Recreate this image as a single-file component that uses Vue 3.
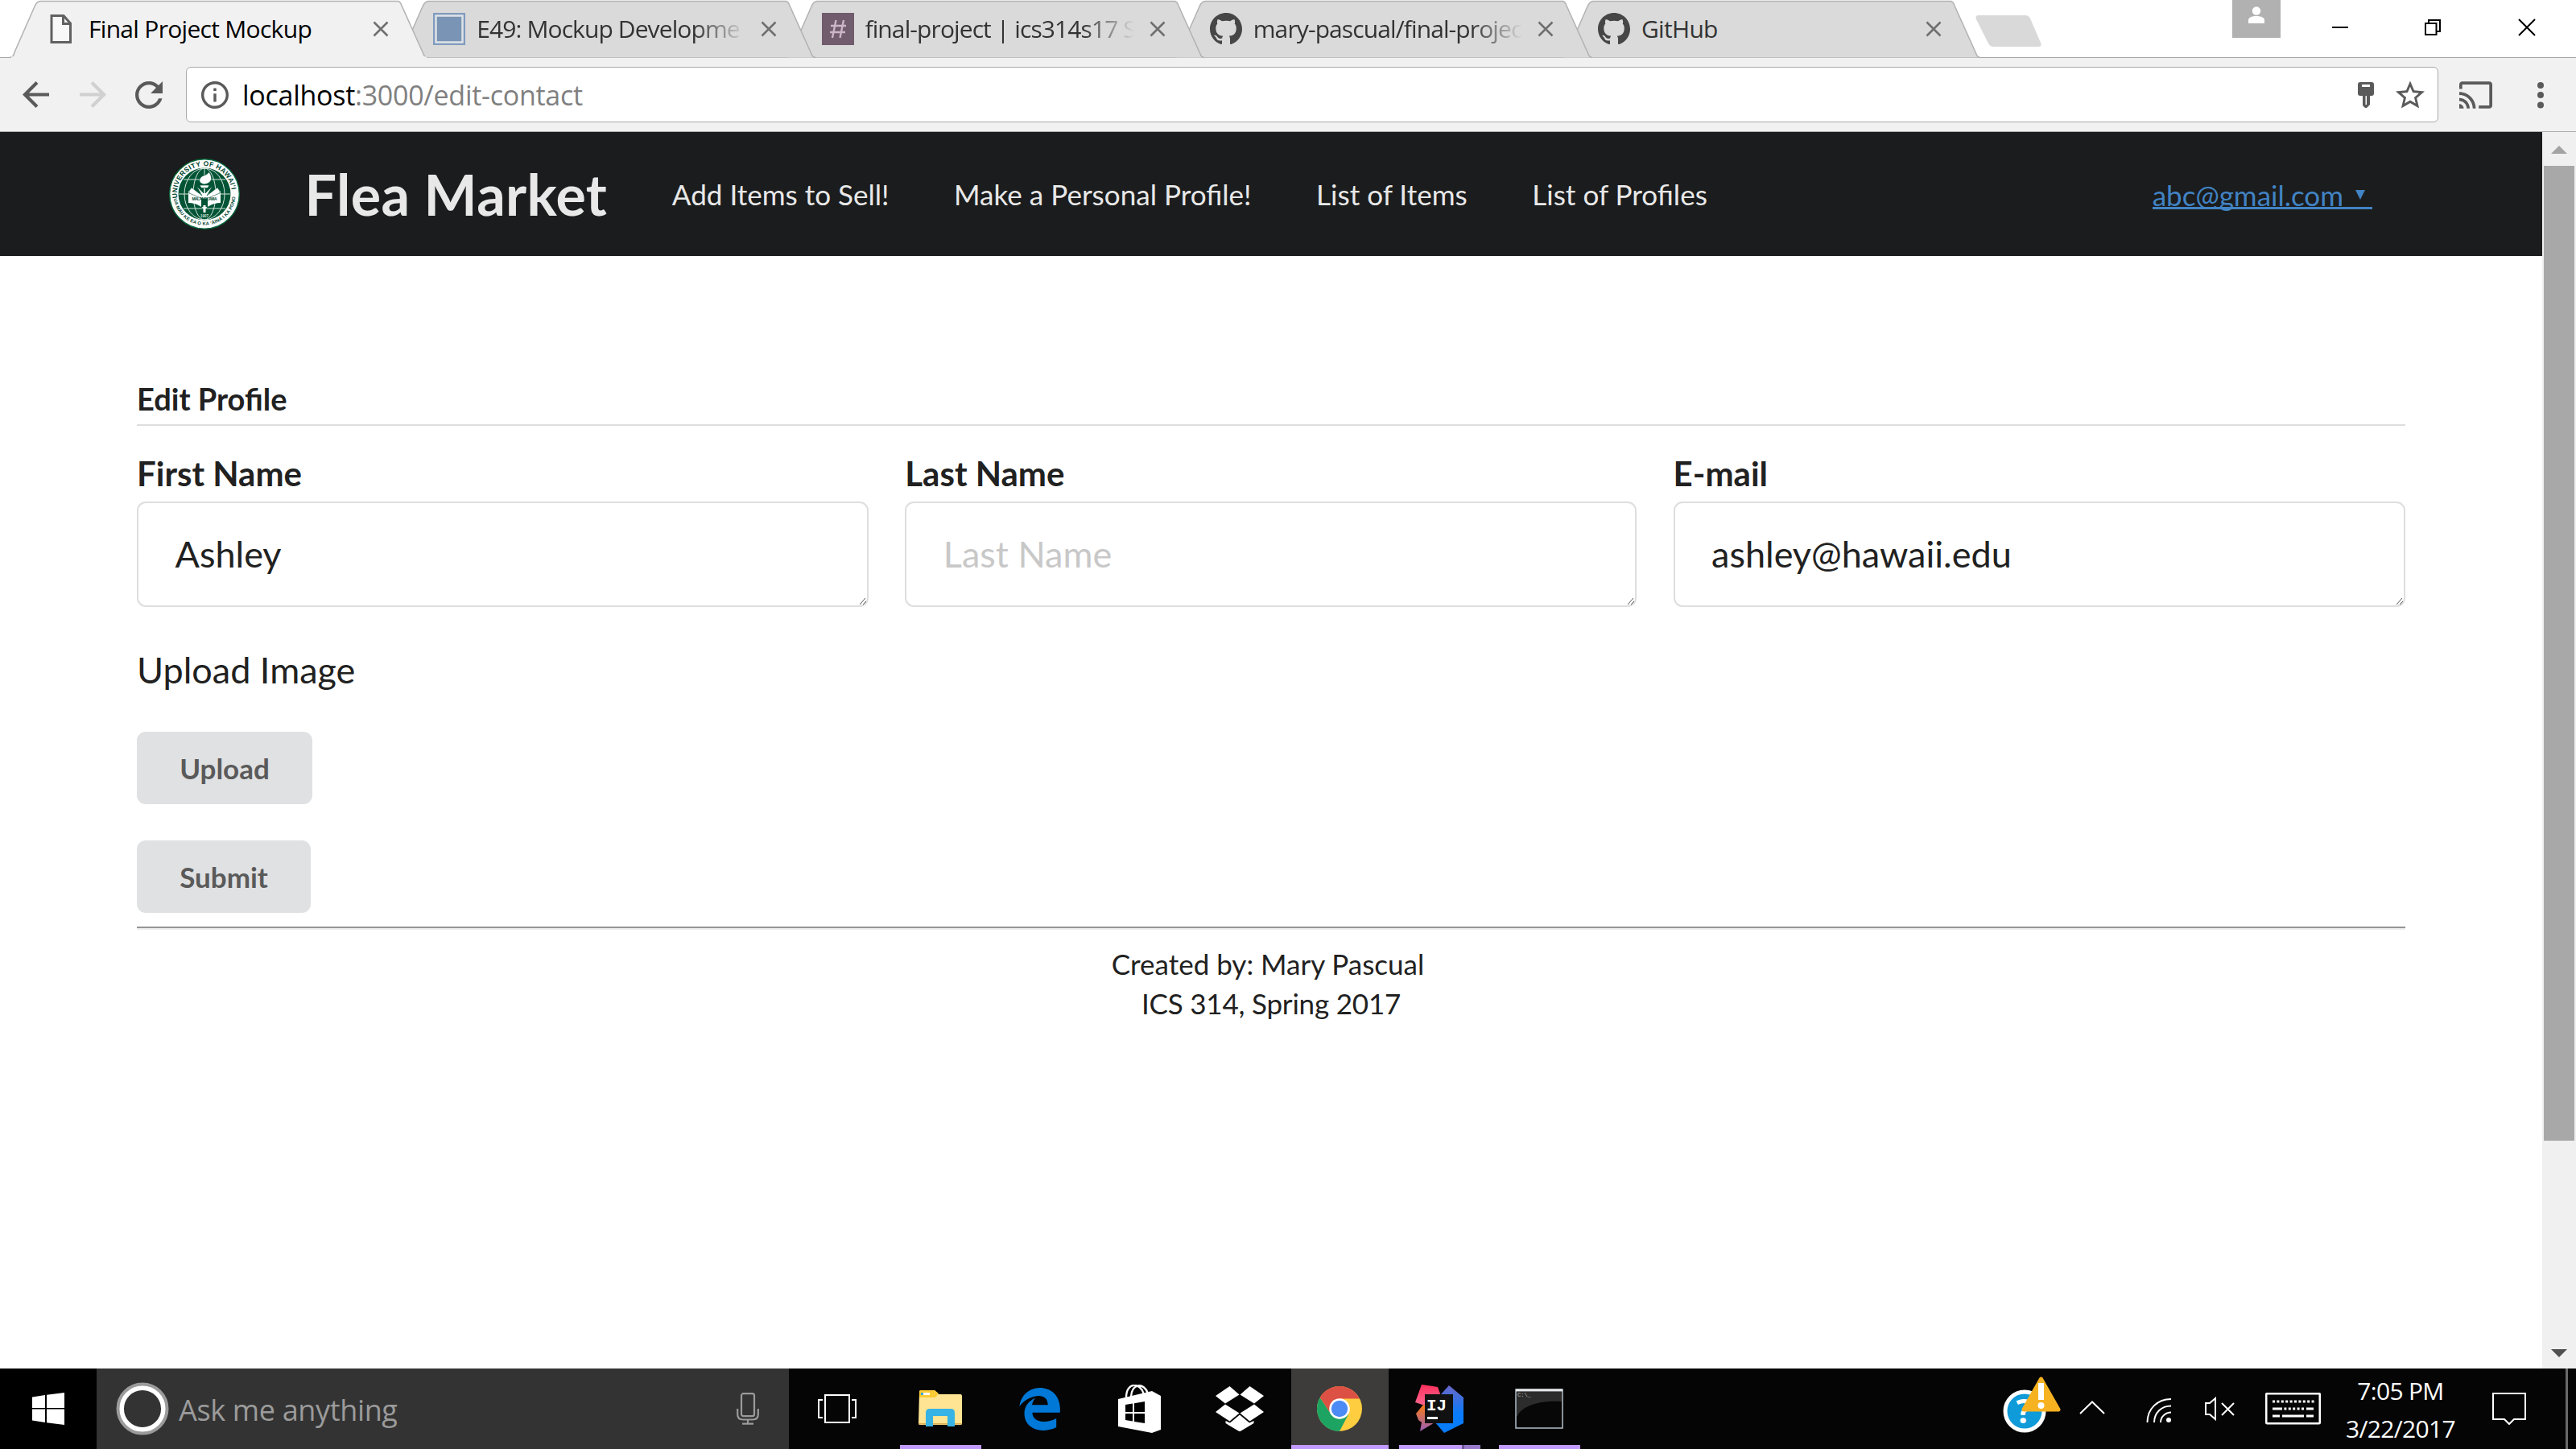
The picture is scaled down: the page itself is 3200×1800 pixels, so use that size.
<script setup>
const githubMark =
  'M8 0C3.58 0 0 3.58 0 8c0 3.54 2.29 6.53 5.47 7.59.4.07.55-.17.55-.38 0-.19-.01-.82-.01-1.49-2.01.37-2.53-.49-2.69-.94-.09-.23-.48-.94-.82-1.13-.28-.15-.68-.52-.01-.53.63-.01 1.08.58 1.23.82.72 1.21 1.87.87 2.33.66.07-.52.28-.87.51-1.07-1.78-.2-3.64-.89-3.64-3.95 0-.87.31-1.59.82-2.15-.08-.2-.36-1.02.08-2.12 0 0 .67-.21 2.2.82.64-.18 1.32-.27 2-.27s1.36.09 2 .27c1.53-1.04 2.2-.82 2.2-.82.44 1.1.16 1.92.08 2.12.51.56.82 1.27.82 2.15 0 3.07-1.87 3.75-3.65 3.95.29.25.54.73.54 1.48 0 1.07-.01 1.93-.01 2.2 0 .21.15.46.55.38A8.01 8.01 0 0 0 16 8c0-4.42-3.58-8-8-8z'

const tabs = [
  { title: 'Final Project Mockup', icon: 'file' },
  { title: 'E49: Mockup Developme', icon: 'square', fade: true },
  { title: 'final-project | ics314s17 S', icon: 'hash', fade: true },
  { title: 'mary-pascual/final-projec', icon: 'github', fade: true },
  { title: 'GitHub', icon: 'github' },
]

const links = ['Add Items to Sell!', 'Make a Personal Profile!', 'List of Items', 'List of Profiles']

const fields = [
  { label: 'First Name', value: 'Ashley' },
  { label: 'Last Name', placeholder: 'Last Name' },
  { label: 'E-mail', value: 'ashley@hawaii.edu' },
]
</script>

<template>
  <div class="screen">
    <header class="tabstrip">
      <div
        v-for="(tab, i) in tabs"
        :key="tab.title"
        class="tab"
        :class="{ active: i === 0 }"
        :style="{ zIndex: tabs.length - i }"
      >
        <svg class="tab-shape" width="518" height="72" viewBox="0 0 518 72">
          <path d="M-1 71.5C3 71 4 69 5 65L30 8Q33 1.5 37 1.5H481Q484 1.5 486 7L513 67Q514 71 518 71.5" />
          <path v-if="i === 0" class="seam" d="M1 71.5H517" />
        </svg>
        <span class="tab-icon">
          <svg v-if="tab.icon === 'file'" width="40" height="40" viewBox="0 0 40 40">
            <path d="M8 3.5H23L31.5 13V36.5H8Z M22.5 4V13.5H31" fill="#f8f8f8" stroke="#616161" stroke-width="3" />
          </svg>
          <svg v-else-if="tab.icon === 'square'" width="40" height="40" viewBox="0 0 40 40">
            <rect width="40" height="40" fill="#7f9bbd" />
            <rect x="3.5" y="3.5" width="33" height="33" fill="#7994b4" stroke="#dfe3e8" stroke-width="2.5" />
          </svg>
          <svg v-else-if="tab.icon === 'hash'" width="40" height="40" viewBox="0 0 40 40">
            <rect width="40" height="40" fill="#705c6c" />
            <path d="M17.5 9L13 31M27 9L22.500 31M11 16H30M10 24H29" stroke="#cdb5c8" stroke-width="2.4" />
          </svg>
          <svg v-else width="40" height="40" viewBox="0 0 16 16"><path :d="githubMark" fill="#464646" /></svg>
        </span>
        <span class="tab-title" :class="{ fade: tab.fade }">{{ tab.title }}</span>
        <svg class="tab-close" width="20" height="20" viewBox="0 0 20 20">
          <path d="M1.500 1.500L18.500 18.500M18.500 1.500L1.500 18.500" />
        </svg>
      </div>
      <svg class="new-tab" width="84" height="42" viewBox="0 0 84 42">
        <path d="M5 1H63Q67 1 69 5L82 35Q84 40 79 40H24Q19 40 17 36L2 6Q0 1 5 1Z" fill="#d9d9d9" />
      </svg>
      <div class="window-controls">
        <span class="user">
          <svg width="22" height="22" viewBox="0 0 22 22" fill="#fff">
            <circle cx="11" cy="5.500" r="5.200" />
            <path d="M1 21V17C1 13 7 12 11 12S21 13 21 17V21Z" />
          </svg>
        </span>
        <svg class="minimize" width="22" height="22" viewBox="0 0 22 22"><path d="M1 11H21" stroke="#000" stroke-width="2" /></svg>
        <svg class="restore" width="22" height="22" viewBox="0 0 22 22">
          <path d="M2 6H15.500V20H2ZM6 6V2H20V16H16" fill="none" stroke="#000" stroke-width="2" />
        </svg>
        <svg class="close" width="22" height="22" viewBox="0 0 22 22"><path d="M1 1L21 21M21 1L1 21" stroke="#000" stroke-width="2" /></svg>
      </div>
    </header>

    <div class="toolbar">
      <svg class="back" width="33" height="33" viewBox="4 4 16 16"><path d="M20 11H7.830l5.590-5.590L12 4l-8 8 8 8 1.410-1.410L7.830 13H20v-2z" fill="#5a5a5a" /></svg>
      <svg class="forward" width="33" height="33" viewBox="4 4 16 16"><path d="M4 13H16.170l-5.590 5.590L12 20l8-8-8-8-1.410 1.410L16.170 11H4v2z" fill="#d0d0d0" /></svg>
      <svg class="reload" width="34" height="34" viewBox="4 4 16 16">
        <path d="M17.650 6.350C16.200 4.900 14.210 4 12 4c-4.420 0-7.990 3.580-7.990 8s3.570 8 7.990 8c3.730 0 6.840-2.550 7.730-6h-2.080c-.82 2.330-3.040 4-5.650 4-3.310 0-6-2.690-6-6s2.690-6 6-6c1.660 0 3.140.69 4.220 1.780L13 11h7V4l-2.350 2.350z" fill="#5a5a5a" />
      </svg>
      <div class="omnibox">
        <svg width="34" height="34" viewBox="2 2 20 20">
          <path d="M11 17h2v-6h-2v6zm1-15C6.480 2 2 6.480 2 12s4.480 10 10 10 10-4.480 10-10S17.520 2 12 2zm0 18c-4.410 0-8-3.590-8-8s3.590-8 8-8 8 3.590 8 8-3.590 8-8 8zM11 9h2V7h-2v2z" fill="#5a5a5a" />
        </svg>
        <span class="url"><b>localhost</b>:3000/edit-contact</span>
        <svg class="key" width="22" height="32" viewBox="0 0 22 32">
          <path d="M4 0H18Q21 0 21 3V14Q21 17 18 17H16V28L12 32H10L7 29V17H4Q1 17 1 14V3Q1 0 4 0ZM6 3V6H16V3ZM10.500 17V28H12V17Z" fill="#5a5a5a" fill-rule="evenodd" />
        </svg>
        <svg class="star" width="36" height="35" viewBox="2 2 20 19">
          <path d="M22 9.240l-7.190-.62L12 2 9.190 8.630 2 9.240l5.460 4.730L5.820 21 12 17.270 18.180 21l-1.630-7.030L22 9.240zM12 15.400l-3.760 2.270 1-4.280-3.320-2.880 4.380-.38L12 6.100l1.710 4.040 4.380.38-3.320 2.880 1 4.280L12 15.400z" fill="#5a5a5a" />
        </svg>
      </div>
      <svg class="cast" width="41" height="34" viewBox="1 3 22 18">
        <path d="M21 3H3c-1.100 0-2 .9-2 2v3h2V5h18v14h-7v2h7c1.100 0 2-.9 2-2V5c0-1.100-.9-2-2-2zM1 18v3h3c0-1.660-1.340-3-3-3zm0-4v2c2.760 0 5 2.240 5 5h2c0-3.870-3.130-7-7-7zm0-4v2c4.970 0 9 4.030 9 9h2c0-6.080-4.930-11-11-11z" fill="#5a5a5a" />
      </svg>
      <svg class="dots" width="10" height="34" viewBox="0 0 10 34" fill="#5a5a5a">
        <circle cx="5" cy="5" r="4" /><circle cx="5" cy="17" r="4" /><circle cx="5" cy="29.500" r="4" />
      </svg>
    </div>

    <div class="viewport">
      <div class="page">
        <nav class="navbar">
          <svg class="seal" width="88" height="88" viewBox="0 0 88 88">
            <defs>
              <path id="seal-top" d="M10.500 49A34 34 0 1 1 77.500 49" />
              <path id="seal-bottom" d="M5.500 47A38.600 38.600 0 0 0 82.500 47" />
            </defs>
            <circle cx="44" cy="44" r="43.300" fill="#fff" stroke="#0a6a40" stroke-width="1.400" />
            <circle cx="44" cy="44" r="32.500" fill="#005435" />
            <g fill="none" stroke="#d5e4dc" stroke-width="1">
              <ellipse cx="44" cy="44" rx="14" ry="32" />
              <ellipse cx="44" cy="44" rx="25" ry="32" />
              <path d="M44 12V20M12 44H76M18 26H70M18 62H70" />
            </g>
            <path d="M24 40L40 47V60H48V47L64 40V55Q53 55 44 63Q35 55 24 55Z" fill="#fff" />
            <path d="M28 36L41 46L34 34L43 43V36H45V43L54 34L47 46L60 36L63 40V43L46 50H42L25 43V40Z" fill="#fff" stroke="#005435" stroke-width=".6" />
            <path d="M38 33H50L48 36.500H40Z M44 32C34 30 38 23 43 21C46 20 50 18 49 16C54 22 55 30 44 32Z" fill="#fff" stroke="#005435" stroke-width=".7" />
            <path d="M42.500 58H45.500V67H42.500Z" fill="#fff" />
            <text class="seal-motto" x="28.500" y="51.500" textLength="31">MALAMALAMA</text>
            <text class="seal-year" x="39" y="73">1907</text>
            <text class="seal-text"><textPath href="#seal-top" textLength="108">UNIVERSITY OF HAWAI‘I</textPath></text>
            <text class="seal-text small"><textPath href="#seal-bottom" startOffset="3" textLength="112">UA MAU KE EA O KA ‘ĀINA I KA PONO</textPath></text>
          </svg>
          <h1>Flea Market</h1>
          <a v-for="link in links" :key="link">{{ link }}</a>
          <a class="account">abc@gmail.com
            <svg width="12" height="12" viewBox="0 0 12 12"><path d="M0 0H12L6 12Z" fill="#4183c4" /></svg>
          </a>
        </nav>

        <main class="container">
          <h4>Edit Profile</h4>
          <div class="fields">
            <div v-for="field in fields" :key="field.label" class="field">
              <label>{{ field.label }}</label>
              <div class="textarea">
                <span v-if="field.value">{{ field.value }}</span>
                <span v-else class="placeholder">{{ field.placeholder }}</span>
                <svg class="grip" width="8" height="8" viewBox="0 0 8 8"><path d="M0 8L7 0M4 8L8 4" stroke="#555" stroke-width="1" /></svg>
              </div>
            </div>
          </div>
          <p class="upload-label">Upload Image</p>
          <button type="button" class="upload">Upload</button>
          <button type="button" class="submit">Submit</button>
          <div class="rule"></div>
          <footer>
            <div class="author">Created by: Mary Pascual</div>
            <div class="course">ICS 314, Spring 2017</div>
          </footer>
        </main>
      </div>
      <div class="scrollbar">
        <svg width="20" height="10" viewBox="0 0 20 10"><path d="M10 0L20 10H0Z" fill="#a3a3a3" /></svg>
        <div class="thumb"></div>
        <svg class="down" width="20" height="10" viewBox="0 0 20 10"><path d="M0 0H20L10 10Z" fill="#505050" /></svg>
      </div>
    </div>

    <div class="taskbar">
      <div class="start">
        <svg width="40" height="40" viewBox="0 0 40 40" fill="#fff"><path d="M0 5.500L16 3V19H0ZM18 2.700L40 0V19H18ZM0 20.500H16V37L0 34.500ZM18 20.500H40V40L18 37.300Z" /></svg>
      </div>
      <div class="search">
        <svg width="66" height="66" viewBox="0 0 66 66" fill="none">
          <circle cx="33" cy="33" r="30" stroke="#9b9b9b" stroke-width="5" />
          <circle cx="33" cy="33" r="25.800" stroke="#fff" stroke-width="5.500" />
        </svg>
        <span>Ask me anything</span>
        <svg class="mic" width="28" height="40" viewBox="0 0 28 40" fill="none" stroke="#9b9b9b" stroke-width="2.200">
          <rect x="6" y="1.200" width="16" height="28" rx="2.500" />
          <path d="M1.200 20V27Q1.200 33.500 8 33.500H20Q26.800 33.500 26.800 27V20M14 34V39M7 38.700H21" />
        </svg>
      </div>

      <div class="slot taskview">
        <svg width="48" height="36" viewBox="0 0 48 36" fill="none" stroke="#fff" stroke-width="2">
          <path d="M9 1H39V35H9ZM6 7H1V29H6M42 7H47V29H42" />
        </svg>
      </div>
      <div class="slot">
        <svg width="54" height="48" viewBox="0 0 54 48">
          <path d="M1 3Q1 1 3 1H20L24 6H52Q54 6 54 8V42Q54 44 52 44H2Q0 44 0 42Z" fill="#ffe593" />
          <path d="M1 3Q1 1 3 1H20L25 5L21 10H1Z" fill="#fccb36" />
          <path d="M3 4H14V7H3Z" fill="#fff" />
          <path d="M3 4H6V7H3Z" fill="#3ba9cf" />
          <path d="M0 42H54V43.500H0Z" fill="#dcae50" />
          <path d="M9 46V29Q9 24 14 24H40Q45 24 45 29V46H36V33H18V46Z" fill="#37b3e5" />
        </svg>
        <i class="running"></i>
      </div>
      <div class="slot">
        <svg width="51" height="54" viewBox="2.600 1.600 18.700 20.400" preserveAspectRatio="none">
          <path d="M2.740 10.810C3.830-1.360 22.500-1.360 21.200 13.560H8.610C8.610 17.850 14.420 19.210 19.540 16.310V20.530C13.250 23.880 5 21.430 5 14.090C5 8.580 9.970 6.810 9.970 6.810C9.970 6.810 8.580 8.580 8.540 10.050H15.700C15.700 2.930 5.900 5.570 2.740 10.810Z" fill="#0078d7" />
        </svg>
      </div>
      <div class="slot">
        <svg width="53" height="60" viewBox="0 0 53 60">
          <path d="M10 16C10-4 28-3 32 12M16 15C17-2 32-3 37 11" fill="none" stroke="#fff" stroke-width="2.400" />
          <path d="M0 18L42 8L53 14V56L42 60L0 52Z" fill="#fff" />
          <path d="M9 25L18 23.500V34H9ZM20 23.200L33 21V34H20ZM9 36H18V45.500L9 44ZM20 36H33V48L20 46Z" fill="#000" />
        </svg>
      </div>
      <div class="slot">
        <svg width="60" height="56" viewBox="0 0 60 56" fill="#fff">
          <path d="M17.500 0L29.500 10.500L12 21.500L0 12ZM42.500 0L60 12L48 21.500L30.500 10.500ZM12 22.500L29.500 33.500L17.500 43.500L0 32ZM48 22.500L60 32L42.500 43.500L30.500 33.500ZM30 35.500L42 45.500L47.500 43V46L30 56.500L12.500 46V43L18 45.500Z" />
        </svg>
      </div>
      <div class="slot current">
        <svg width="56" height="56" viewBox="0 0 56 56">
          <circle cx="28" cy="28" r="28" fill="#ffcd40" />
          <path d="M3.750 14A28 28 0 0 0 28 56L39 35L17.200 34.300Z" fill="#1da462" />
          <path d="M28 28L17.200 34.300L3.750 14A28 28 0 0 1 53 15.500H28Z" fill="#dd5144" />
          <circle cx="28" cy="28" r="12.800" fill="#fff" />
          <circle cx="28" cy="28" r="10.200" fill="#4c8bf5" />
        </svg>
        <i class="running"></i>
      </div>
      <div class="slot">
        <svg width="60" height="60" viewBox="0 0 60 60">
          <defs>
            <linearGradient id="ij-pink" x2="0" y2="1"><stop offset="0" stop-color="#fe315d" /><stop offset="1" stop-color="#f9668e" /></linearGradient>
            <linearGradient id="ij-blue" x2="0" y2="1"><stop offset="0" stop-color="#6b66c8" /><stop offset=".6" stop-color="#087cfa" /></linearGradient>
            <linearGradient id="ij-low" x2="0" y2="1"><stop offset="0" stop-color="#f97a12" /><stop offset="1" stop-color="#9a5fb8" /></linearGradient>
          </defs>
          <path d="M10 25L1 36L4 44L8 47L6 58L26 46V30Z" fill="url(#ij-low)" />
          <path d="M8 0L28 3L34 20L12 26L0 22Z" fill="url(#ij-pink)" />
          <path d="M32 12L42 1L60 16V48L36 60L24 46Z" fill="url(#ij-blue)" />
          <rect x="12" y="12" width="35" height="36" fill="#111" />
          <text class="ij" x="14" y="32">IJ</text>
          <rect x="15" y="40" width="13" height="3" fill="#fff" />
        </svg>
        <i class="running grouped"></i>
      </div>
      <div class="slot">
        <svg width="60" height="50" viewBox="0 0 60 50">
          <rect x="1" y="1" width="58" height="48" fill="#070707" stroke="#aab4bc" stroke-width="1.600" />
          <path d="M2 4H58V16C30 14 8 22 3 34H2Z" fill="#2c2c2c" />
          <path d="M1 2H59" stroke="#e4e8ea" stroke-width="3" />
          <text class="prompt" x="3" y="10">C:\_</text>
        </svg>
        <i class="running"></i>
      </div>

      <div class="tray">
        <svg class="help" width="74" height="72" viewBox="0 0 74 72">
          <circle cx="28" cy="44" r="24" fill="#0f9ad9" stroke="#fff" stroke-width="5" />
          <text class="question" x="17.500" y="59">?</text>
          <path d="M48.500 4L70 42H27Z" fill="#f6b221" stroke="#f6b221" stroke-width="5" stroke-linejoin="round" />
          <path d="M45 9H52V30H45Z" fill="#fff" /><circle cx="48.500" cy="37" r="4" fill="#fff" />
        </svg>
        <svg class="chevron" width="32" height="17" viewBox="0 0 32 17"><path d="M1 16L16 1.500L31 16" fill="none" stroke="#fff" stroke-width="2" /></svg>
        <svg class="wifi" width="32" height="32" viewBox="0 0 32 32" fill="none" stroke="#fff" stroke-width="2">
          <path d="M1.500 31C1.500 14 14 2 31 2M10 31C10 19 19 10.500 31 10.500M18 31C18 24 24 18.500 31 18.500" />
          <circle cx="28" cy="28" r="3" fill="#fff" stroke="none" />
        </svg>
        <svg class="volume" width="37" height="30" viewBox="0 0 37 30" fill="none" stroke="#fff" stroke-width="2">
          <path d="M1 8H6L13 2V28L6 22H1ZM21 8L36 23M36 8L21 23" />
        </svg>
        <svg class="keyboard" width="69" height="40" viewBox="0 0 69 40" fill="none" stroke="#fff">
          <rect x="1.200" y="1.200" width="66.600" height="37" rx="1" stroke-width="2.600" />
          <path d="M9 11H61M18 20H50" stroke-width="3" stroke-dasharray="3 2.400" />
          <path d="M9 20H18M51 20H60M9 29H18M21 29H48M51 29H60" stroke-width="3" />
        </svg>
        <div class="clock"><span>7:05 PM</span><span class="date">3/22/2017</span></div>
        <svg class="action" width="42" height="40" viewBox="0 0 42 40"><path d="M1 1H41V33H27L21 39L15 33H1Z" fill="none" stroke="#fff" stroke-width="2" /></svg>
        <i class="peek"></i>
      </div>
    </div>
  </div>
</template>

<style>
body {
  overflow: hidden;
  background: #fff;
}
</style>

<style scoped>
* {
  box-sizing: border-box;
}
svg {
  display: block;
  flex: none;
}
.screen {
  width: 3200px;
  height: 1800px;
  display: flex;
  flex-direction: column;
  overflow: hidden;
  background: #fff;
  font-family: Lato, "Liberation Sans", sans-serif;
  color: #212121;
}

/* tabs */
.tabstrip {
  position: relative;
  display: flex;
  align-items: flex-start;
  height: 72px;
  padding-left: 13px;
  background: #fff;
  border-bottom: 1px solid #a5a5a5;
  font-family: "Open Sans", "Noto Sans", sans-serif;
}
.tab {
  position: relative;
  flex: none;
  display: flex;
  align-items: center;
  width: 482.25px;
  height: 72px;
  padding-left: 43px;
}
.tab-shape {
  position: absolute;
  left: 0;
  top: 0;
  overflow: visible;
}
.tab-shape path {
  fill: #dadada;
  stroke: #b2b2b2;
  stroke-width: 1.500px;
}
.active .tab-shape path {
  fill: #f1f1f1;
}
.active .tab-shape .seam {
  stroke: #f1f1f1;
  stroke-width: 2.500px;
}
.tab-icon,
.tab-title,
.tab-close {
  position: relative;
}
.tab-icon {
  width: 40px;
  margin-right: 14px;
}
.tab-title {
  width: 340px;
  font-size: 30px;
  line-height: 72px;
  letter-spacing: -0.7px;
  white-space: nowrap;
  color: #333;
}
.active .tab-title {
  color: #000;
}
.tab-title.fade {
  letter-spacing: -0.9px;
  -webkit-mask-image: linear-gradient(to right, #000 270px, transparent 334px);
  mask-image: linear-gradient(to right, #000 270px, transparent 334px);
}
.tab-close {
  margin-left: 13px;
  stroke: #6f6f6f;
  stroke-width: 2.500px;
}
.new-tab {
  margin: 18px 0 0 29px;
}
.window-controls {
  display: flex;
  align-items: flex-start;
  margin-left: auto;
  padding-right: 50px;
}
.user {
  width: 60px;
  height: 47px;
  padding: 8px 19px;
  background: #b1b1b1;
}
.minimize { margin: 23px 0 0 63px; }
.restore { margin: 23px 0 0 93px; }
.close { margin: 23px 0 0 95px; }

/* toolbar */
.toolbar {
  display: flex;
  align-items: center;
  height: 92px;
  background: #f1f1f1;
  border-bottom: 1px solid #adadad;
}
.back { margin-left: 28px; }
.forward { margin-left: 38px; }
.reload { margin-left: 36px; }
.omnibox {
  display: flex;
  align-items: center;
  width: 2798px;
  height: 69px;
  margin-left: 29px;
  padding-left: 18px;
  background: #fff;
  border: 1.500px solid #a9a9a9;
  border-radius: 6px;
}
.url {
  margin-left: 17px;
  font: 34px/60px "Open Sans", "Noto Sans", sans-serif;
  letter-spacing: -0.27px;
  color: #808080;
}
.url b {
  font-weight: 400;
  color: #000;
}
.key { margin-left: auto; }
.star { margin: 0 16px 0 26px; }
.cast { margin-left: 26px; }
.dots { margin-left: 55px; }

/* page */
.viewport {
  display: flex;
  height: 1536px;
}
.page {
  width: 3158px;
}
.navbar {
  display: flex;
  align-items: center;
  gap: 80.500px;
  height: 154px;
  padding: 0 211px 0 210px;
  background: #1b1c1d;
  color: #e8e8e8;
  font-size: 35.100px;
}
.navbar h1 {
  margin: 0;
  font-size: 70px;
  line-height: 90px;
  letter-spacing: 0.35px;
}
.account {
  display: flex;
  align-items: center;
  gap: 15px;
  height: 39px;
  margin: 0 0 1px auto;
  padding: 5px 9px 0 0;
  color: #4183c4;
  font-size: 35px;
  border-bottom: 3px solid #4183c4;
}
.seal-text {
  font: bold 8.500px "Liberation Sans", sans-serif;
  fill: #024731;
}
.seal-text.small {
  font-size: 5.800px;
}
.seal-motto {
  font: bold 5px "Liberation Sans", sans-serif;
  fill: #024731;
}
.seal-year {
  font: bold 4.500px "Liberation Sans", sans-serif;
  fill: #d5e4dc;
}
.container {
  display: flex;
  flex-direction: column;
  align-items: flex-start;
  padding: 153px 170px 0;
}
h4 {
  width: 100%;
  margin: 0 0 34px;
  padding-bottom: 7px;
  font-size: 38px;
  line-height: 49px;
  border-bottom: 2px solid #dededf;
}
.fields {
  display: grid;
  grid-template-columns: repeat(3, 909px);
  column-gap: 45.300px;
}
label {
  display: block;
  margin-bottom: 10px;
  font-size: 42px;
  font-weight: 700;
  line-height: 50px;
}
.textarea {
  position: relative;
  height: 131px;
  padding-left: 45.500px;
  font-size: 45px;
  line-height: 127px;
  border: 2px solid #dededf;
  border-radius: 11px;
}
.placeholder {
  color: #c8c8c8;
}
.grip {
  position: absolute;
  right: 1px;
  bottom: 1px;
}
.upload-label {
  margin: 48px 0 46px;
  font-size: 45px;
  line-height: 61px;
}
button {
  height: 90px;
  padding: 0;
  border: 0;
  border-radius: 11px;
  background: #e0e1e2;
  color: #5a5a5a;
  font: 700 35px/90px Lato, sans-serif;
}
.upload {
  width: 218px;
  margin-bottom: 45px;
}
.submit {
  width: 216px;
  margin-bottom: 17px;
}
.rule {
  width: 100%;
  height: 4px;
  background: #eee;
  border-top: 2px solid #959595;
}
footer {
  width: 100%;
  margin-top: 18px;
  font-size: 35px;
  line-height: 49px;
  text-align: center;
}
.author {
  padding-right: 8px;
}
.course {
  letter-spacing: -0.2px;
}
.scrollbar {
  display: flex;
  flex-direction: column;
  align-items: center;
  width: 42px;
  padding: 17px 0 14px;
  background: #f0f0f0;
}
.thumb {
  width: 38px;
  height: 1211px;
  margin-top: 15px;
  background: #a8a8a8;
}
.down {
  margin-top: auto;
}

/* taskbar */
.taskbar {
  display: flex;
  height: 100px;
  background: #050505;
  color: #fff;
  font-family: "Open Sans", "Noto Sans", sans-serif;
}
.start {
  display: flex;
  align-items: center;
  justify-content: center;
  width: 120px;
  background: #000;
}
.search {
  display: flex;
  align-items: center;
  width: 860px;
  padding: 0 37px 0 24px;
  background: #333;
  color: #9b9b9b;
  font-size: 36px;
  letter-spacing: -0.35px;
}
.search span {
  margin: 2px 0 0 12px;
}
.mic {
  margin-left: auto;
}
.slot {
  position: relative;
  display: flex;
  align-items: center;
  justify-content: center;
  width: 121px;
  margin-right: 3px;
  padding-right: 2px;
}
.taskview {
  width: 120px;
  margin-right: 8px;
  padding-right: 0;
}
.current {
  background: #3d3c3b;
}
.running {
  position: absolute;
  left: 10px;
  right: 10px;
  bottom: 0;
  height: 5px;
  background: #c299ff;
}
.current .running {
  left: 0;
  right: 0;
}
.running.grouped {
  background: linear-gradient(to right, #c299ff 78px, #6f5a92 78px, #6f5a92 81px, #9a7bcb 81px);
}
.ij {
  font: bold 21px "Liberation Mono", monospace;
  fill: #fff;
}
.prompt {
  font: 7px "Liberation Mono", monospace;
  fill: #bbb;
}
.tray {
  display: flex;
  align-items: center;
  margin-left: auto;
}
.help { margin: 0 22px 10px 0; }
.question {
  font: bold 42px "Open Sans", sans-serif;
  fill: #fff;
}
.chevron { margin: -4px 51px 0 0; }
.wifi { margin: 4px 41px 0 0; }
.volume { margin-right: 38px; }
.clock {
  display: flex;
  flex-direction: column;
  align-items: center;
  width: 140px;
  margin: 2px 44px 0 29px;
  font-size: 30px;
  line-height: 47px;
  letter-spacing: -0.7px;
  white-space: nowrap;
}
.action { margin-right: 49px; }
.peek {
  width: 13px;
  height: 100px;
  border-left: 3px solid #6a6a6a;
}
</style>
